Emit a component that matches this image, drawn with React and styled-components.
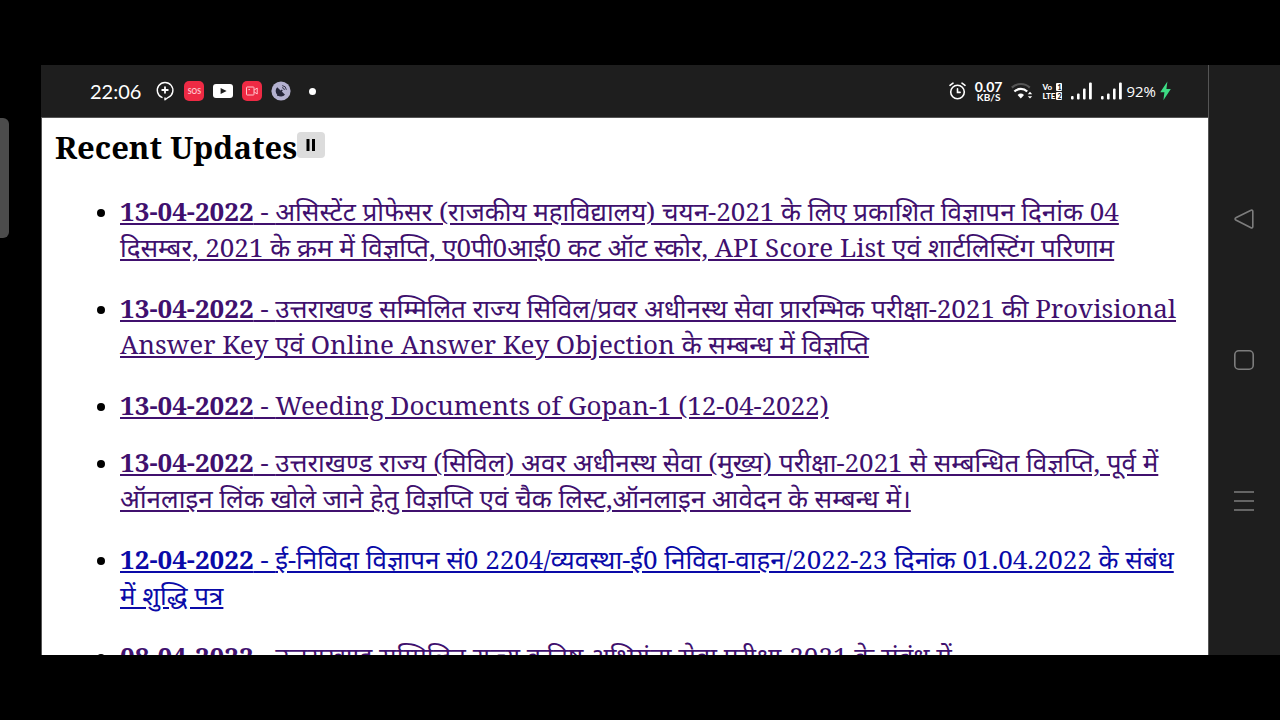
import React from 'react';
import styled, { createGlobalStyle } from 'styled-components';

const updates = [
  {
    date: '13-04-2022',
    text: 'असिस्टेंट प्रोफेसर (राजकीय महाविद्यालय) चयन-2021 के लिए प्रकाशित विज्ञापन दिनांक 04 दिसम्बर, 2021 के क्रम में विज्ञप्ति, ए0पी0आई0 कट ऑट स्कोर, API Score List एवं शार्टलिस्टिंग परिणाम',
    hindi: true,
    seen: true,
  },
  {
    date: '13-04-2022',
    text: 'उत्तराखण्ड सम्मिलित राज्य सिविल/प्रवर अधीनस्थ सेवा प्रारम्भिक परीक्षा-2021 की Provisional Answer Key एवं Online Answer Key Objection के सम्बन्ध में विज्ञप्ति',
    hindi: true,
    seen: true,
  },
  {
    date: '13-04-2022',
    text: 'Weeding Documents of Gopan-1 (12-04-2022)',
    seen: true,
  },
  {
    date: '13-04-2022',
    text: 'उत्तराखण्ड राज्य (सिविल) अवर अधीनस्थ सेवा (मुख्य) परीक्षा-2021 से सम्बन्धित विज्ञप्ति, पूर्व में ऑनलाइन लिंक खोले जाने हेतु विज्ञप्ति एवं चैक लिस्ट,ऑनलाइन आवेदन के सम्बन्ध में।',
    hindi: true,
    seen: true,
  },
  {
    date: '12-04-2022',
    text: 'ई-निविदा विज्ञापन सं0 2204/व्यवस्था-ई0 निविदा-वाहन/2022-23 दिनांक 01.04.2022 के संबंध में शुद्धि पत्र',
    hindi: true,
  },
  {
    date: '08-04-2022',
    text: 'उत्तराखण्ड सम्मिलित राज्य कनिष्ठ अभियंता सेवा परीक्षा-2021 के संबंध में',
    hindi: true,
    seen: true,
  },
];

function Signal() {
  return (
    <svg width="21" height="18" viewBox="0 0 21 18" fill="#fff" aria-hidden="true">
      <rect x="0" y="14" width="2.6" height="3.4" rx="1" />
      <rect x="6" y="11.4" width="2.6" height="6" rx="1" />
      <rect x="12" y="6.4" width="2.6" height="11" rx="1" />
      <rect x="18" y="0.4" width="2.8" height="17" rx="1" />
    </svg>
  );
}

export default function App() {
  return (
    <Phone>
      <GlobalStyle />
      <EdgeHandle />
      <Screen>
        <StatusBar>
          <Clock>22:06</Clock>
          <Notices>
            <svg width="20" height="20" viewBox="0 0 20 20" fill="none" stroke="#fff" strokeWidth="1.4" strokeLinecap="round" strokeLinejoin="round" aria-hidden="true">
              <path d="M7 16.4A7.8 7.8 0 1 1 13.4 16.3L10 18.8V16.9" />
              <path d="M10 6.2v5.6M7.2 9h5.6" strokeWidth="1.8" />
            </svg>
            <Badge>SOS</Badge>
            <svg width="20" height="20" viewBox="0 0 20 20" aria-hidden="true">
              <rect x="0" y="3" width="20" height="14" rx="3" fill="#fff" />
              <path d="M7.6 7v6l6-3z" fill="#1e1e1e" />
            </svg>
            <Badge>
              <svg width="12" height="10" viewBox="0 0 12 10" fill="none" stroke="#ffc4cc" strokeWidth="1" aria-hidden="true">
                <rect x="0.5" y="1" width="7.5" height="8" rx="0.6" />
                <path d="M8 4.2 11.2 2v6L8 5.8M2.4 3.6h1.6" />
              </svg>
            </Badge>
            <svg width="20" height="20" viewBox="0 0 20 20" aria-hidden="true">
              <circle cx="10" cy="10" r="9.6" fill="#b4b1d0" />
              <path d="M6.2 6.2A5.3 5.3 0 0 0 14 13.8L10.8 10.6 11.8 9.4 10.8 8.4 9.6 9.4ZM6.2 12.2v2.8h4.4" fill="#26263a" />
              <path d="M11 6.6a2.6 2.6 0 0 1 2.4 2.4M11.2 4.6a4.6 4.6 0 0 1 4.2 4.2" fill="none" stroke="#26263a" strokeWidth="0.9" />
            </svg>
            <Dot />
          </Notices>
          <Indicators>
            <svg width="17" height="18" viewBox="0 0 17 18" fill="none" stroke="#fff" strokeWidth="1.6" strokeLinecap="round" aria-hidden="true">
              <circle cx="8.5" cy="10" r="6.8" />
              <path d="M8.5 6.8v3.6h2.6M1 3.4 4 1.2M16 3.4 13 1.2" />
            </svg>
            <Speed>
              <b>0.07</b>
              <small>KB/S</small>
            </Speed>
            <svg width="22" height="18" viewBox="0 0 22 18" fill="none" strokeWidth="2.2" aria-hidden="true">
              <path d="M0.8 5.6a13 13 0 0 1 18 0" stroke="#555" />
              <path d="M3.4 9.6a9 9 0 0 1 12.8 0" stroke="#fff" />
              <path d="M6.6 13a4.8 4.8 0 0 1 6.4 0L9.8 16.6Z" fill="#fff" />
              <path d="M16.8 12.2 19 9.8l2.2 2.4zM16.8 14.2h4.4L19 16.6z" fill="#fff" />
            </svg>
            <Volte>
              <span>Vo<i>1</i></span>
              <span>LTE<i>2</i></span>
            </Volte>
            <Signal />
            <Battery>
              <Signal />
              <span>92%</span>
              <svg width="11" height="20" viewBox="0 0 11 20" fill="#3ddc84" aria-hidden="true">
                <path d="M7.4 0.6 0.2 11.2h4.2L3.4 19.2 10.8 8H6.4Z" />
              </svg>
            </Battery>
          </Indicators>
        </StatusBar>
        <Page>
          <Heading>
            <h2>Recent Updates</h2>
            <PauseButton type="button" aria-label="Pause">
              <svg width="10" height="12" viewBox="0 0 10 12" aria-hidden="true">
                <path d="M0.5 0h3v12h-3zM6 0h3v12H6z" />
              </svg>
            </PauseButton>
          </Heading>
          <List>
            {updates.map((item) => (
              <Item key={item.text} $hindi={item.hindi}>
                <UpdateLink href="#" $seen={item.seen}>
                  <b>{item.date}</b> - {item.text}
                </UpdateLink>
              </Item>
            ))}
          </List>
        </Page>
      </Screen>
      <NavBar>
        <NavButton type="button" aria-label="Back">
          <svg width="20" height="20" viewBox="0 0 20 20" aria-hidden="true">
            <path d="M17 1.2 1.8 8.8a1.2 1.2 0 0 0 0 2.2L17 18.8a1.2 1.2 0 0 0 1.8-1V2.2A1.2 1.2 0 0 0 17 1.2Z" />
          </svg>
        </NavButton>
        <NavButton type="button" aria-label="Home">
          <svg width="20" height="20" viewBox="0 0 20 20" aria-hidden="true">
            <rect x="0.8" y="0.8" width="18.4" height="18.4" rx="4" />
          </svg>
        </NavButton>
        <NavButton type="button" aria-label="Recent apps">
          <svg width="20" height="20" viewBox="0 0 20 20" aria-hidden="true">
            <path d="M0 1h20M0 10h20M0 19h20" />
          </svg>
        </NavButton>
      </NavBar>
    </Phone>
  );
}

const GlobalStyle = createGlobalStyle`
  * {
    box-sizing: border-box;
  }

  body {
    margin: 0;
    background: #000;
  }
`;

const Phone = styled.div`
  position: relative;
  display: flex;
  height: 100vh;
  padding: 65px 0 65px 41px;
  overflow: hidden;
  background: #000;
  font-family: Lato, sans-serif;
`;

const EdgeHandle = styled.div`
  position: absolute;
  top: 118px;
  left: 0;
  width: 9px;
  height: 120px;
  border-radius: 0 6px 6px 0;
  background: #4c4c4c;
`;

const Screen = styled.main`
  flex: 1;
  min-width: 0;
  display: flex;
  flex-direction: column;
`;

const StatusBar = styled.header`
  flex: none;
  display: flex;
  align-items: center;
  height: 53px;
  padding: 0 37px 0 49px;
  border-bottom: 1px solid #555;
  background: #1e1e1e;
  color: #fff;
`;

const Clock = styled.time`
  font-size: 20px;
`;

const Notices = styled.div`
  display: flex;
  align-items: center;
  gap: 9px;
  margin-left: 14px;
`;

const Badge = styled.span`
  display: flex;
  align-items: center;
  justify-content: center;
  width: 20px;
  height: 20px;
  border-radius: 5px;
  background: #ee2a44;
  color: #ffc4cc;
  font-size: 7px;
  font-weight: 700;
`;

const Dot = styled.span`
  width: 7px;
  height: 7px;
  margin-left: 9px;
  border-radius: 50%;
  background: #fff;
`;

const Indicators = styled.div`
  display: flex;
  align-items: center;
  gap: 9px;
  margin-left: auto;
`;

const Speed = styled.div`
  display: flex;
  flex-direction: column;
  align-items: center;

  b {
    font-size: 14px;
    line-height: 12px;
  }

  small {
    font-size: 10px;
    font-weight: 700;
    line-height: 8px;
  }
`;

const Volte = styled.div`
  display: grid;
  gap: 1px;
  width: 20px;
  font-size: 8px;
  font-weight: 900;
  line-height: 8px;

  span {
    display: flex;
    align-items: center;
    justify-content: space-between;
  }

  i {
    width: 6px;
    height: 8px;
    border-radius: 1px;
    background: #fff;
    color: #1e1e1e;
    font-size: 7px;
    font-style: normal;
    text-align: center;
  }
`;

const Battery = styled.div`
  display: flex;
  align-items: center;
  gap: 4px;
  font: 500 15px 'Open Sans', sans-serif;
`;

const Page = styled.section`
  flex: 1;
  min-height: 0;
  overflow: hidden;
  padding: 8px 13px 0;
  border-left: 1px solid #555;
  background: #fff;
  color: #000;
  font-family: 'Noto Serif', 'Noto Sans', serif;
`;

const Heading = styled.div`
  display: flex;
  align-items: center;

  h2 {
    margin: 0;
    font-size: 31px;
    line-height: 42px;
  }
`;

const PauseButton = styled.button`
  display: flex;
  align-items: center;
  justify-content: center;
  width: 28px;
  height: 26px;
  margin-bottom: 4px;
  padding: 0;
  border: 0;
  border-radius: 4px;
  background: #dcdcdc;
`;

const List = styled.ul`
  margin: 25px 0 0;
  padding: 0 0 0 65px;
  font-size: 26px;
  line-height: 36px;
`;

const Item = styled.li`
  margin-bottom: 21px;
  padding-bottom: ${(props) => (props.$hindi ? '4px' : '0')};

  &::marker {
    font-size: 22px;
  }
`;

const UpdateLink = styled.a`
  color: ${(props) => (props.$seen ? '#40106e' : '#0a0aa8')};
  text-decoration: underline;
`;

const NavBar = styled.nav`
  flex: none;
  display: flex;
  flex-direction: column;
  align-items: center;
  justify-content: center;
  gap: 121px;
  width: 72px;
  padding-right: 2px;
  border-left: 1px solid #555;
  background: #1e1e1e;
`;

const NavButton = styled.button`
  display: flex;
  padding: 0;
  border: 0;
  background: none;

  svg {
    fill: none;
    stroke: #7d7d7d;
    stroke-width: 1.6;
  }
`;
